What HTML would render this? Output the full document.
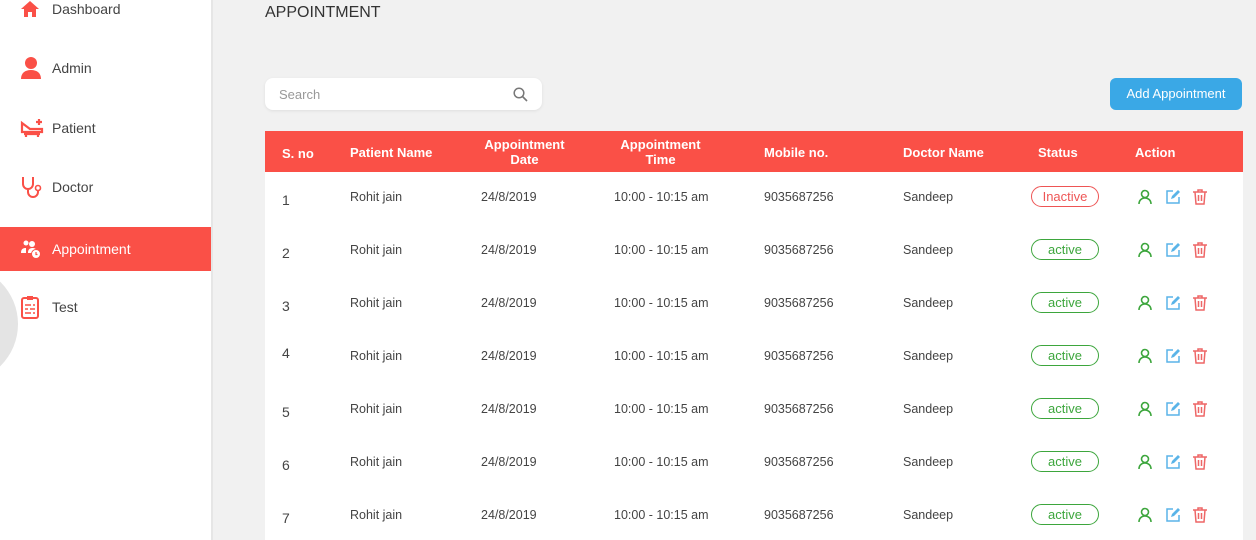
<!DOCTYPE html>
<html><head><style>
*{margin:0;padding:0;box-sizing:border-box}
html,body{width:1256px;height:540px;overflow:hidden}
body{background:#f1f1f1;font-family:"Liberation Sans",sans-serif;position:relative}
.side{position:absolute;left:0;top:0;width:213px;height:540px;background:#fff;border-right:2px solid #e6e6e6;overflow:hidden}
.circ{position:absolute;left:-100px;top:265px;width:118px;height:118px;border-radius:50%;background:#e4e4e4}
.nav{position:absolute;left:0;width:211px;height:44px;display:flex;align-items:center;font-size:14px;color:#444}
.nav svg{position:absolute;left:20px}
.nav span{position:absolute;left:52px}
.nav.act{background:#fa5047;color:#fff}
.abs{position:absolute}
h1{position:absolute;left:265px;top:4px;font-size:16px;font-weight:normal;color:#333}
.search{position:absolute;left:265px;top:78px;width:277px;height:32px;background:#fff;border-radius:8px;box-shadow:0 1px 3px rgba(0,0,0,.08);font-size:13px;color:#999;padding:9px 14px}
.btn{position:absolute;left:1110px;top:78px;width:132px;height:32px;background:#3aa8e6;border-radius:6px;color:#fff;font-size:13px;text-align:center;line-height:32px}
.table{position:absolute;left:265px;top:131px;width:978px;height:409px;background:#fff}
.hd{position:absolute;left:265px;top:131px;width:978px;height:41px;background:#fa5047;color:#fff;font-weight:bold;font-size:13px}
.hd div{position:absolute;line-height:15px;text-align:center}
.c{position:absolute;font-size:12.5px;color:#444}
.pill{position:absolute;left:1031px;width:68px;height:21px;border-radius:11px;border:1px solid #3da63d;color:#3da63d;font-size:13px;text-align:center;line-height:19px}
.pill.in{border-color:#e55;color:#e55}
</style></head><body>
<div class="side">
<div class="circ"></div>
<div class="nav" style="top:-13px"><svg width="20" height="18" viewBox="0 0 20 18"><path d="M10 1L1 9h3v8h4v-5h4v5h4V9h3z" fill="#fa5047"/></svg><span>Dashboard</span></div>
<div class="nav" style="top:46px"><svg width="22" height="24" viewBox="0 0 22 24"><circle cx="11" cy="7" r="6" fill="#fa5047"/><path d="M1 23c0-6 4-9 10-9s10 3 10 9z" fill="#fa5047"/></svg><span>Admin</span></div>
<div class="nav" style="top:106px"><svg width="24" height="22" viewBox="0 0 24 22"><path d="M2 6l8 6h12v3H2zM4 17h16M6 15v5M18 15v5M19 2v6M16 5h6" stroke="#fa5047" stroke-width="2.2" fill="none"/></svg><span>Patient</span></div>
<div class="nav" style="top:165px"><svg width="22" height="24" viewBox="0 0 22 24"><path d="M3 2v7a5 5 0 0010 0V2M8 14v3a5 5 0 0010 0v-2" stroke="#fa5047" stroke-width="2" fill="none"/><circle cx="18" cy="13" r="2.5" stroke="#fa5047" stroke-width="1.6" fill="none"/></svg><span>Doctor</span></div>
<div class="nav act" style="top:227px"><svg width="22" height="20" viewBox="0 0 22 20"><circle cx="6" cy="4" r="2.5" fill="#fff"/><circle cx="12" cy="5" r="3" fill="#fff"/><path d="M1 14c0-4 2-5 5-5v5zM8 14c0-4 2-5 5-5 3 0 3 2 3 2v3z" fill="#fff"/><circle cx="16" cy="15" r="4.5" fill="#fff" stroke="#fa5047" stroke-width="1"/><path d="M16 13v2.5h1.5" stroke="#fa5047" stroke-width="1.2" fill="none"/></svg><span>Appointment</span></div>
<div class="nav" style="top:285px"><svg width="20" height="24" viewBox="0 0 20 24"><rect x="2" y="3" width="16" height="20" rx="2" stroke="#fa5047" stroke-width="2" fill="none"/><rect x="7" y="1" width="6" height="4" fill="#fa5047"/><path d="M5 10h6M13 10h2M5 14h3M10 14h5M5 18h6M13 18h2" stroke="#fa5047" stroke-width="1.6"/></svg><span>Test</span></div>
</div>
<h1>APPOINTMENT</h1>
<div class="search">Search<svg class="abs" style="left:248px;top:9px" width="15" height="15" viewBox="0 0 15 15"><circle cx="6" cy="6" r="4.8" stroke="#777" stroke-width="1.5" fill="none"/><path d="M9.5 9.5l4.5 4.5" stroke="#777" stroke-width="1.6"/></svg></div>
<div class="btn">Add Appointment</div>
<div class="table"></div>
<div class="hd">
<div style="left:17px;top:15px">S. no</div>
<div style="left:85px;top:14px">Patient Name</div>
<div style="left:212px;top:6px;width:95px">Appointment<br>Date</div>
<div style="left:348px;top:6px;width:95px">Appointment<br>Time</div>
<div style="left:499px;top:14px">Mobile no.</div>
<div style="left:638px;top:14px">Doctor Name</div>
<div style="left:773px;top:14px">Status</div>
<div style="left:870px;top:14px">Action</div>
</div>
<div id="rows"></div>
<script>
var h='',ys=[198,251,304,357,410,463,516];
for(var i=0;i<7;i++){var y=ys[i];
h+='<div class="c" style="left:282px;top:'+(y-7+(i==3?-5:1))+'px;font-size:14px">'+(i+1)+'</div>'+
'<div class="c" style="left:350px;top:'+(y-8)+'px">Rohit jain</div>'+
'<div class="c" style="left:481px;top:'+(y-8)+'px">24/8/2019</div>'+
'<div class="c" style="left:614px;top:'+(y-8)+'px">10:00 - 10:15 am</div>'+
'<div class="c" style="left:764px;top:'+(y-8)+'px">9035687256</div>'+
'<div class="c" style="left:903px;top:'+(y-8)+'px">Sandeep</div>'+
'<div class="pill'+(i==0?' in':'')+'" style="top:'+(y-12)+'px">'+(i==0?'Inactive':'active')+'</div>'+
'<svg class="abs" style="left:1137px;top:'+(y-9)+'px" width="16" height="16" viewBox="0 0 16 16"><circle cx="8" cy="5" r="3.5" stroke="#3da63d" stroke-width="1.6" fill="none"/><path d="M2 15c0-4 3-6 6-6s6 2 6 6" stroke="#3da63d" stroke-width="1.6" fill="none"/></svg>'+
'<svg class="abs" style="left:1165px;top:'+(y-9)+'px" width="16" height="16" viewBox="0 0 16 16"><path d="M8 2H2v12h12V8" stroke="#5ab4e8" stroke-width="1.5" fill="none"/><path d="M6 10l1-3 6-6 2 2-6 6z" fill="#5ab4e8"/></svg>'+
'<svg class="abs" style="left:1192px;top:'+(y-10)+'px" width="16" height="17" viewBox="0 0 16 17"><path d="M1 4h14M6 4V2h4v2M3 4l1 12h8l1-12M6.5 7v6M9.5 7v6" stroke="#e66" stroke-width="1.5" fill="none"/></svg>';}
document.getElementById('rows').innerHTML=h;
</script>
</body></html>
